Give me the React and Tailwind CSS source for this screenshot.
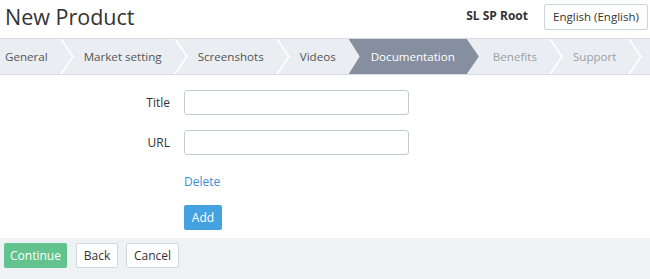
const tabsBefore = ['General', 'Market setting', 'Screenshots', 'Videos'];
const tabsAfter = ['Benefits', 'Support'];

const Chevron = () => (
    <svg width="14" height="35" viewBox="0 0 14 35" className="shrink-0 ml-[12px] mr-[10px]">
        <polyline points="1,0 13,17.5 1,35" fill="none" stroke="#ffffff" strokeWidth="1.6" />
    </svg>
);

const App = () => {
    return (
        <div className="w-[650px] h-[279px] bg-white flex flex-col text-[#333] font-['Open_Sans',sans-serif] overflow-hidden">
            <div className="h-[38px] flex items-center justify-between pl-[5px] pr-[2px]">
                <h1 className="text-[21.5px] leading-none text-[#333] -mt-[4px] whitespace-nowrap">New Product</h1>
                <div className="flex items-center">
                    <span className="text-[12px] font-bold text-[#333] mr-[16px] -mt-[6px] whitespace-nowrap">SL SP Root</span>
                    <button className="h-[26px] w-[104px] border border-[#cfd4da] rounded-[2px] bg-white text-[11.5px] text-[#333] -mt-[5px] whitespace-nowrap">
                        English (English)
                    </button>
                </div>
            </div>

            <div className="h-[37px] bg-[#eaedf1] border-y border-[#d7dce2] flex items-stretch pl-[5px] text-[11.6px] whitespace-nowrap">
                {tabsBefore.map((t, i) => (
                    <div key={t} className="flex items-center shrink-0">
                        <span className="text-[#555]">{t}</span>
                        {i < tabsBefore.length - 1 && <Chevron />}
                    </div>
                ))}
                <div
                    className="ml-[13px] flex items-center shrink-0 pl-[22px] pr-[24px] bg-[#858fa0] text-white"
                    style={{ clipPath: 'polygon(0 0, calc(100% - 12px) 0, 100% 50%, calc(100% - 12px) 100%, 0 100%, 11px 50%)' }}
                >
                    Documentation
                </div>
                <div className="flex items-center shrink-0 ml-[14px]">
                    <span className="text-[#9a9fa6]">{tabsAfter[0]}</span>
                    <Chevron />
                    <span className="text-[#9a9fa6]">{tabsAfter[1]}</span>
                    <Chevron />
                </div>
            </div>

            <div className="flex-1 flex flex-col pt-[15px] pb-[8px] text-[12px]">
                <div className="flex items-center">
                    <label className="w-[170px] text-right text-[#333]">Title</label>
                    <input className="ml-[14px] w-[225px] h-[25px] border border-[#c6cbd1] rounded-[3px] bg-white outline-none" />
                </div>
                <div className="flex items-center mt-[15px]">
                    <label className="w-[170px] text-right text-[#333]">URL</label>
                    <input className="ml-[14px] w-[225px] h-[25px] border border-[#c6cbd1] rounded-[3px] bg-white outline-none" />
                </div>
                <div className="pl-[184px] mt-[18px] h-[18px] flex items-center">
                    <a className="text-[#3d8fd6] cursor-pointer">Delete</a>
                </div>
                <div className="pl-[184px] mt-[14px]">
                    <button className="h-[25px] w-[38px] rounded-[2px] bg-[#45a2e0] text-white text-[12px]">Add</button>
                </div>
            </div>

            <div className="h-[41px] bg-[#eff2f5] flex items-start pt-[5px] pl-[4px] gap-[9px] text-[12px]">
                <button className="h-[25px] w-[63px] rounded-[2px] bg-[#62c38e] text-white">Continue</button>
                <button className="h-[25px] w-[42px] rounded-[2px] bg-white border border-[#d3d7dc] text-[#333]">Back</button>
                <button className="h-[25px] w-[53px] rounded-[2px] bg-white border border-[#d3d7dc] text-[#333] -ml-[1px]">Cancel</button>
            </div>
        </div>
    );
};

export default App;
